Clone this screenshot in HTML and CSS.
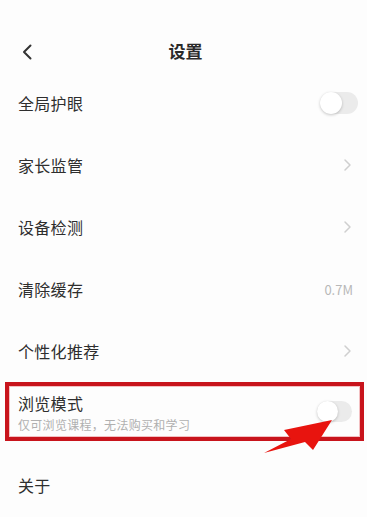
FILE: index.html
```html
<!DOCTYPE html>
<html lang="zh">
<head>
<meta charset="utf-8">
<link rel="stylesheet" href="styles.css">
</head>
<body>
<div class="page">
  <header class="header">
    <svg class="back" width="12" height="16" viewBox="0 0 12 16"><path d="M9.5 1.5 L3 8 L9.5 14.5" fill="none" stroke="#333" stroke-width="2" stroke-linecap="round" stroke-linejoin="round"/></svg>
    <h1 class="title">设置</h1>
  </header>
  <ul class="list">
    <li class="row"><span class="label">全局护眼</span><span class="switch"><span class="knob"></span></span></li>
    <li class="row"><span class="label">家长监管</span><svg class="chev" width="9" height="14" viewBox="0 0 9 14"><path d="M2 2 L7 7 L2 12" fill="none" stroke="#cfcfcf" stroke-width="1.5" stroke-linecap="round" stroke-linejoin="round"/></svg></li>
    <li class="row"><span class="label">设备检测</span><svg class="chev" width="9" height="14" viewBox="0 0 9 14"><path d="M2 2 L7 7 L2 12" fill="none" stroke="#cfcfcf" stroke-width="1.5" stroke-linecap="round" stroke-linejoin="round"/></svg></li>
    <li class="row"><span class="label">清除缓存</span><span class="value">0.7M</span></li>
    <li class="row"><span class="label">个性化推荐</span><svg class="chev" width="9" height="14" viewBox="0 0 9 14"><path d="M2 2 L7 7 L2 12" fill="none" stroke="#cfcfcf" stroke-width="1.5" stroke-linecap="round" stroke-linejoin="round"/></svg></li>
    <li class="row row-box">
      <div class="stack">
        <span class="label">浏览模式</span>
        <span class="sub">仅可浏览课程，无法购买和学习</span>
      </div>
      <span class="switch switch-sm"><span class="knob"></span></span>
    </li>
    <li class="row row-last"><span class="label">关于</span></li>
  </ul>
  <svg class="arrow" width="367" height="517" viewBox="0 0 367 517">
    <polygon points="264,453 291,439 284,430 332,420 313,450 305,442" fill="#e8140f"/>
  </svg>
</div>
</body>
</html>
```
FILE: styles.css
```css
* { box-sizing: border-box; }
html, body { margin: 0; padding: 0; background: #fdfdfd; }
body {
  font-family: "Noto Sans CJK SC", "Noto Sans", sans-serif;
  color: #333;
  width: 367px;
  height: 517px;
  overflow: hidden;
}
.page { position: relative; width: 367px; height: 517px; }
.header {
  height: 72px;
  padding-top: 26px;
  display: flex;
  align-items: center;
  position: relative;
}
.header .back { position: absolute; left: 21px; top: 44px; }
.title {
  flex: 1;
  margin: 0;
  text-align: center;
  font-size: 17px;
  font-weight: 700;
  line-height: 46px;
  height: 46px;
  color: #2a2a2a;
  padding-left: 4px;
  padding-top: 2px;
}
.list { list-style: none; margin: 0; padding: 0; }
.row {
  height: 62px;
  display: flex;
  align-items: center;
  justify-content: space-between;
  padding: 0 14px 0 18px;
}
.label { font-size: 16px; line-height: 20px; color: #2e2e2e; letter-spacing: 0.3px; }
.value { font-size: 13px; color: #b8b8b8; margin-right: 0; }
.chev { margin-right: 1px; }
.switch {
  width: 38px;
  height: 22px;
  border-radius: 11px;
  background: #ebebeb;
  position: relative;
  margin-right: -5px;
}
.knob {
  position: absolute;
  left: 0;
  top: 0;
  width: 22px;
  height: 22px;
  border-radius: 50%;
  background: #fff;
  box-shadow: 0 1px 3px rgba(0,0,0,0.22);
}
.row-box {
  height: 59px;
  margin: 0 3px 0 5px;
  border: 4px solid #c8141c;
  box-shadow: inset 0 0 0 1px #f3c0c2;
  padding: 0 6px 0 9px;
  align-items: center;
}
.stack { display: flex; flex-direction: column; gap: 5px; margin-top: 2px; }
.sub { font-size: 12px; color: #b0b0b0; line-height: 14px; letter-spacing: 0.3px; }
.switch-sm { width: 35px; height: 21px; margin-right: 2px; }
.switch-sm .knob { width: 21px; height: 21px; }
.row-last { height: 88px; }
.arrow { position: absolute; left: 0; top: 0; pointer-events: none; }
```
